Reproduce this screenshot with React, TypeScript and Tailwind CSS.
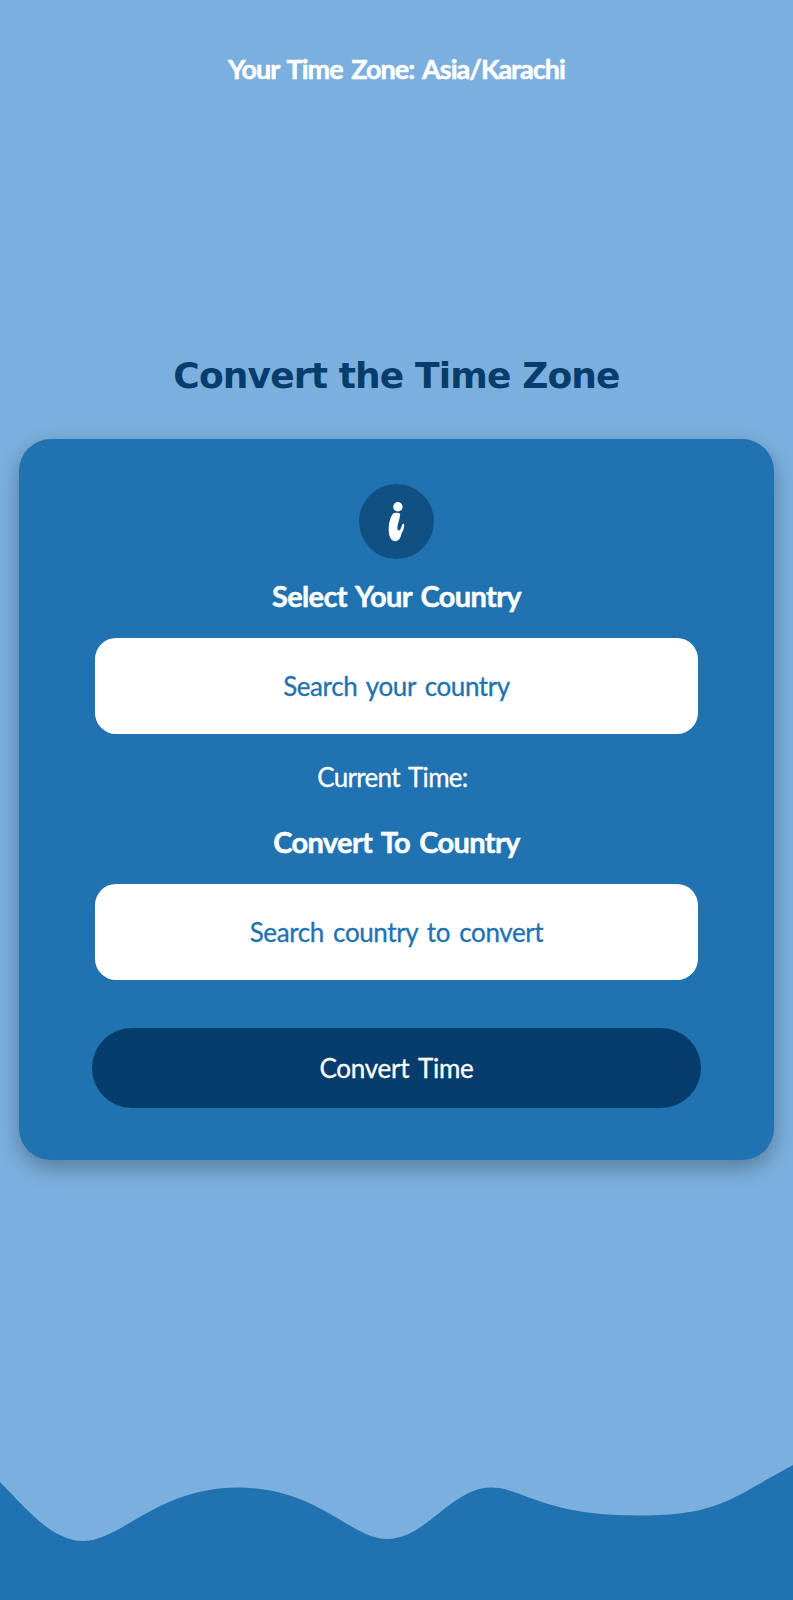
import React from "react";

function InfoIcon() {
  return (
    <svg className="h-[75px] w-[75px]" viewBox="0 0 75 75" aria-label="Info">
      <circle cx="37.5" cy="37.5" r="37.5" fill="#115082" />
      <circle cx="38.9" cy="22.8" r="4.7" fill="#fff" />
      <path
        d="M34.2 29.5 C35.2 28.4 40.4 28.2 41.2 30.2 C41.2 34 38.6 39 38.3 44 C38.3 46.6 40 47.2 41.3 45.4 C42.2 44 42.6 42 43.3 40.4 C44 39.4 45.4 39.9 45.2 41.2 C45 44.5 44.2 47.4 42.6 49 C42 54 39.4 57.2 36.2 57.2 C32.3 57.2 30 53 29.7 46.5 C29.6 40 31 33 34.2 29.5Z"
        fill="#fff"
      />
    </svg>
  );
}

function CountryInput({ text, spacing }: { text: string; spacing: string }) {
  return (
    <div className="flex h-[96px] w-[603px] items-center justify-center rounded-[21px] bg-white">
      <span
        className={`whitespace-nowrap text-[26px] leading-8 text-[#2172b1] [-webkit-text-stroke:0.3px_#2172b1] ${spacing}`}
      >
        {text}
      </span>
    </div>
  );
}

export default function App() {
  return (
    <div className="flex h-[1600px] w-[793px] flex-col items-center overflow-hidden bg-[#7bb0de] font-['Lato',sans-serif] text-white">
      <header className="flex h-[138px] w-full items-center justify-center">
        <p className="whitespace-nowrap text-[27px] font-bold leading-8 tracking-[-0.97px] [word-spacing:3px] [-webkit-text-stroke:0.5px_white]">
          Your Time Zone: Asia/Karachi
        </p>
      </header>
      <main className="mt-[218px] flex flex-col items-center">
        <h1 className="whitespace-nowrap font-['DejaVu_Sans',sans-serif] text-[36px] font-bold leading-10 tracking-[-0.85px] text-[#063d6c]">
          Convert the Time Zone
        </h1>
        <section className="mt-[43px] flex h-[721px] w-[755px] flex-col items-center rounded-[32px] bg-[#2172b1] pt-[45px] shadow-[0_8px_22px_rgba(0,0,0,0.3)]">
          <InfoIcon />
          <h2 className="mt-[19px] h-[60px] whitespace-nowrap text-[29px] font-bold leading-9 tracking-[-0.65px] [word-spacing:3px] [-webkit-text-stroke:0.5px_white]">
            Select Your Country
          </h2>
          <CountryInput text="Search your country" spacing="tracking-[-0.4px] [word-spacing:3px]" />
          <p className="mt-[27px] h-[66px] whitespace-nowrap pr-2 text-[26px] leading-8 tracking-[-0.7px] [word-spacing:3px] [-webkit-text-stroke:0.3px_white]">
            Current Time:
          </p>
          <h2 className="-mt-[3px] h-[60px] whitespace-nowrap text-[29px] font-bold leading-9 tracking-[-0.65px] [word-spacing:3px] [-webkit-text-stroke:0.5px_white]">
            Convert To Country
          </h2>
          <CountryInput text="Search country to convert" spacing="tracking-[-0.4px] [word-spacing:3px]" />
          <button className="mt-[48px] h-[80px] w-[609px] rounded-[40px] bg-[#063d6c] pt-px text-[26px] tracking-[-0.25px] [word-spacing:3px] [-webkit-text-stroke:0.3px_white]">
            Convert Time
          </button>
        </section>
      </main>
      <svg className="mt-auto h-[140px] w-full shrink-0" viewBox="0 1460 793 140" preserveAspectRatio="none">
        <path
          d="M0 1482 C28 1511 53 1541 83 1541 C121 1541 158 1487.5 238 1487.5 C318 1487.5 351 1539 387 1539 C426 1539 452 1487.5 491 1487.5 C522 1487.5 543 1515.5 636 1515.5 C718 1515.5 728 1500 793 1465 V1600 H0Z"
          fill="#2172b1"
        />
      </svg>
    </div>
  );
}
